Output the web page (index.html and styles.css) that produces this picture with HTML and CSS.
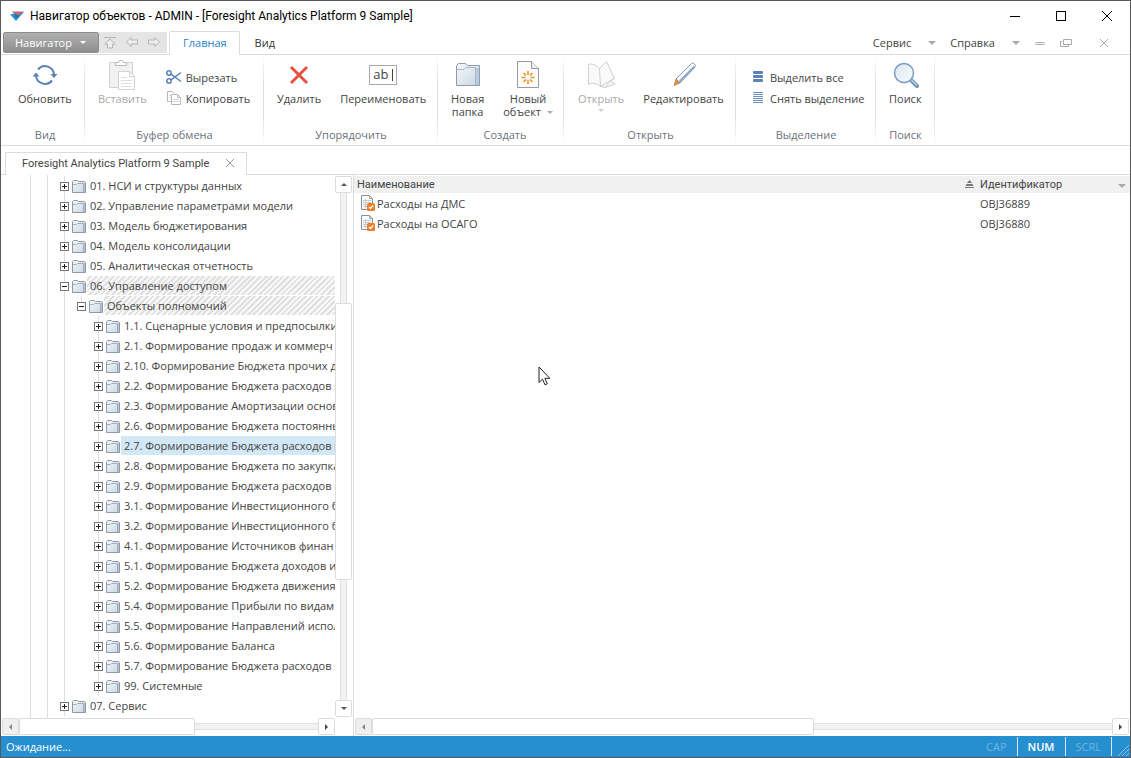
FILE: index.html
```html
<!doctype html>
<html lang="ru">
<head>
	<meta charset="utf-8">
	<meta name="viewport" content="width=device-width, initial-scale=1">
	<title>Навигатор объектов</title>
	<link rel="stylesheet" href="styles.css">
</head>
<body>
<!-- общие иконки -->
<svg class="defs" width="0" height="0" aria-hidden="true">
	<defs>
		<linearGradient id="gFolder" x1="0" y1="0" x2="1" y2="1">
			<stop offset="0" stop-color="#f6f8fa"/><stop offset="1" stop-color="#c9d6e2"/>
		</linearGradient>
		<linearGradient id="gLens" x1="0" y1="0" x2="1" y2="1">
			<stop offset="0" stop-color="#dbe7f1"/><stop offset="1" stop-color="#f8fbfd"/>
		</linearGradient>
		<symbol id="folder" viewBox="0 0 15 13">
			<path d="M.5 12.5V1.5L1.5.5H5.5L6.5 1.5H12.5L13.5 2.5V12.5Z" fill="url(#gFolder)" stroke="#8f9aa8"/>
			<path d="M1 4.500H4.500L5.500 3.500H11.500V12" fill="none" stroke="#a3afbd"/>
			<path d="M12.5 3V12" stroke="#b4c3d3"/>
		</symbol>
		<symbol id="doc" viewBox="0 0 15 16">
			<path d="M.5.5H8.500L11.500 3.500V14.500H.5Z" fill="#fcfcfc" stroke="#8d9299"/>
			<path d="M8.500.5V3.500H11.500" fill="none" stroke="#a5a9ae"/>
			<path d="M2 5.500H10M2 7.500H10M2 9.500H10M2 11.500H6M4.500 4V13" stroke="#c3ccd6"/>
			<rect x="6" y="8" width="8" height="8" rx="1.500" fill="#ee7f2d"/>
			<path d="M8 12L9.500 13.500L12.300 10.300" fill="none" stroke="#fff" stroke-width="1.200"/>
		</symbol>
		<symbol id="plus" viewBox="0 0 9 9">
			<rect x=".5" y=".5" width="8" height="8" fill="#fff" stroke="#777"/>
			<path d="M2 4.500H7M4.500 2V7" stroke="#222"/>
		</symbol>
		<symbol id="minus" viewBox="0 0 9 9">
			<rect x=".5" y=".5" width="8" height="8" fill="#fff" stroke="#777"/>
			<path d="M2 4.500H7" stroke="#222"/>
		</symbol>
	</defs>
</svg>

<div class="window">
	<header class="titlebar">
		<svg class="logo" width="14" height="10" viewBox="0 0 14 10">
			<path d="M0 3.500L14 1L6 10Z" fill="#2c93d1"/>
			<path d="M2 .5H14L9 4.500L4 3Z" fill="#b5697c"/>
			<path d="M4 3L9 4.500L6 7.500Z" fill="#1f6fae"/>
		</svg>
		<h1>Навигатор объектов - ADMIN - [Foresight Analytics Platform 9 Sample]</h1>
		<div class="winbtns">
			<button type="button" aria-label="Свернуть"><svg width="12" height="12"><path d="M1 6.500H11" stroke="#000"/></svg></button>
			<button type="button" aria-label="Развернуть"><svg width="12" height="12"><rect x="1.500" y="1.500" width="9" height="9" fill="none" stroke="#000"/></svg></button>
			<button type="button" aria-label="Закрыть"><svg width="12" height="12"><path d="M1 1L11 11M11 1L1 11" stroke="#111"/></svg></button>
		</div>
	</header>

	<nav class="menubar">
		<button type="button" class="navigator">Навигатор <i class="arrow"></i></button>
		<div class="history">
			<button type="button" aria-label="Вверх"><svg width="14" height="13" viewBox="0 0 14 13"><path d="M1 1.500H13M4.500 12V8H1.800L7 3L12.200 8H9.500V12Z"/></svg></button>
			<button type="button" aria-label="Назад"><svg width="14" height="13" viewBox="0 0 14 13"><path d="M1.500 6L6 1.500V4H12.500V8H6V10.500Z"/></svg></button>
			<button type="button" aria-label="Вперед"><svg width="14" height="13" viewBox="0 0 14 13"><path d="M12.500 6L8 1.500V4H1.500V8H8V10.500Z"/></svg></button>
		</div>
		<button type="button" class="tab active">Главная</button>
		<button type="button" class="tab">Вид</button>
		<div class="menuright">
			<button type="button" class="menu">Сервис <i class="arrow"></i></button>
			<button type="button" class="menu">Справка <i class="arrow"></i></button>
			<div class="mdi">
				<button type="button" aria-label="Свернуть окно"><svg width="12" height="10"><rect x="1.500" y="4.500" width="9" height="2" rx="1"/></svg></button>
				<button type="button" aria-label="Восстановить окно"><svg width="14" height="10"><path d="M4.500 1.500H12.500V6.500H4.500ZM3 3.500H1.500V8.500H9.500V7"/></svg></button>
				<button type="button" aria-label="Закрыть окно" class="last"><svg width="12" height="10"><path d="M2 1L10 9M10 1L2 9"/></svg></button>
			</div>
		</div>
	</nav>

	<div class="ribbon">
		<section class="group g-view">
			<div class="tools">
				<button type="button" class="big">
					<svg width="28" height="30" viewBox="0 0 28 30" fill="none" stroke="#5a82b4" stroke-width="2">
						<path d="M7 9.500A9 9 0 0 1 23 15M5 15A9 9 0 0 0 21 20.500"/>
						<path d="M1.500 16.500L5 12.500L8.500 16.500ZM19.500 14L23 18L26.500 14Z" fill="#5a82b4" stroke="none"/>
					</svg>
					Обновить
				</button>
			</div>
			<h2>Вид</h2>
		</section>

		<section class="group g-clip">
			<div class="tools">
				<button type="button" class="big" disabled>
					<svg width="28" height="30" viewBox="0 0 28 30" fill="#f4f4f4" stroke="#d2d2d2">
						<path d="M1.500 2.500H24.500V27.500H1.500Z" fill="#f1f1f1"/>
						<path d="M7.500 5.500V2.500H10.500L11.500.5H14.500L15.500 2.500H18.500V5.500Z" fill="#fff" stroke="#b9b9b9"/>
						<path d="M10.500 11.500H21.500L26.500 16.500V29.500H10.500Z" fill="#fff"/>
						<path d="M21.500 11.500V16.500H26.500" fill="none"/>
						<path d="M13 17.500H19M13 20.500H24M13 23.500H24M13 26.500H24" stroke="#dedede"/>
					</svg>
					Вставить
				</button>
				<div class="list">
					<button type="button" class="small">
						<svg width="16" height="14" viewBox="0 0 16 14" fill="none" stroke="#5a82b4" stroke-width="1.500">
							<circle cx="3" cy="3" r="2.200"/><circle cx="3" cy="11" r="2.200"/>
							<path d="M5 4.200L15 11.500M5 9.800L15 2.500"/>
						</svg>
						Вырезать
					</button>
					<button type="button" class="small">
						<svg width="16" height="14" viewBox="0 0 16 14" fill="#fff" stroke="#b5b9bd">
							<path d="M1.500.5H6.500L8.500 2.500V10.500H1.500Z"/><path d="M3 4.500H6M3 6.500H6" stroke="#d5d8db"/>
							<path d="M5.500 3.500H11.500L14.500 6.500V13.500H5.500Z"/><path d="M11.500 3.500V6.500H14.500" fill="none"/>
							<path d="M7 8.500H13M7 10.500H13" stroke="#d0d3d6"/>
						</svg>
						Копировать
					</button>
				</div>
			</div>
			<h2>Буфер обмена</h2>
		</section>

		<section class="group g-order">
			<div class="tools">
				<button type="button" class="big">
					<svg width="28" height="30" viewBox="0 0 28 30"><path d="M6 7L22 23M22 7L6 23" stroke="#e4523f" stroke-width="3"/></svg>
					Удалить
				</button>
				<button type="button" class="big">
					<span class="rename"><span>ab</span></span>
					Переименовать
				</button>
			</div>
			<h2>Упорядочить</h2>
		</section>

		<section class="group g-create">
			<div class="tools">
				<button type="button" class="big">
					<svg width="28" height="30" viewBox="0 0 28 30">
						<path d="M2.500 25.500V5.500L4.500 3.500H11.500L13.500 5.500H25.500V25.500Z" fill="url(#gFolder)" stroke="#8e9cad"/>
						<path d="M3 9.500H10L12 7.500H21.500V25" fill="none" stroke="#a9b8c9"/>
						<path d="M22 8H25V25H22Z" fill="#b9cbdc"/>
					</svg>
					Новая<br>папка
				</button>
				<button type="button" class="big">
					<svg width="28" height="30" viewBox="0 0 28 30">
						<path d="M3.500 1.500H17.500L24.500 8.500V27.500H3.500Z" fill="#fcfcfc" stroke="#969ba1"/>
						<path d="M17.500 1.500V8.500H24.500" fill="#eee" stroke="#969ba1"/>
						<path d="M14 11V15M14 20V24M7.500 17.500H11.500M16.500 17.500H20.500M9.500 13L12 15.500M18.500 13L16 15.500M9.500 22L12 19.500M18.500 22L16 19.500" stroke="#f0932b" stroke-width="1.600"/>
					</svg>
					<span>Новый<br>объект <i class="arrow drop"></i></span>
				</button>
			</div>
			<h2>Создать</h2>
		</section>

		<section class="group g-open">
			<div class="tools">
				<button type="button" class="big" disabled>
					<svg width="32" height="30" viewBox="0 0 32 30" fill="#fafafa" stroke="#cfcfcf" stroke-linejoin="round">
						<path d="M3.500 4.500C7 3 11 5 14.500 8.500L21.500 1.500L29.500 18.500L25 21L30 24L20 27.500L15.500 26.500C11 23 7 22.500 3.500 24.500Z"/>
						<path d="M14.500 8.500L15.500 26.500L22 22.500L29.500 18.500M25 21L20 27.500" fill="none"/>
					</svg>
					Открыть
					<i class="arrow pale"></i>
				</button>
				<button type="button" class="big">
					<svg width="28" height="30" viewBox="0 0 28 30" stroke-linejoin="round">
						<path d="M6 19L21.500 3.500C23 2 26.500 5 25 7L10 23Z" fill="#fff" stroke="#8296ad"/>
						<path d="M9.500 21.500L24.500 6.500" stroke="#89a8cd" stroke-width="2"/>
						<path d="M6 19L10 23L4 25.500Z" fill="#f08c30" stroke="#9b7352" stroke-width=".6"/>
					</svg>
					Редактировать
				</button>
			</div>
			<h2>Открыть</h2>
		</section>

		<section class="group g-select">
			<div class="tools">
				<div class="list">
					<button type="button" class="small">
						<svg width="12" height="14" viewBox="0 0 12 14" fill="#5a82b4"><rect x="1" y="1" width="10" height="3" rx="1"/><rect x="1" y="5" width="10" height="3" rx="1"/><rect x="1" y="9" width="10" height="3" rx="1"/></svg>
						Выделить все
					</button>
					<button type="button" class="small">
						<svg width="12" height="14" viewBox="0 0 12 14" stroke="#6f93c0"><path d="M1 1.500H11M1 3.500H11M1 5.500H11M1 7.500H11M1 9.500H11M1 11.500H11"/></svg>
						Снять выделение
					</button>
				</div>
			</div>
			<h2>Выделение</h2>
		</section>

		<section class="group g-search">
			<div class="tools">
				<button type="button" class="big">
					<svg width="28" height="30" viewBox="0 0 28 30">
						<path d="M20 20L26 26" stroke="#7292b8" stroke-width="4" stroke-linecap="round"/>
						<path d="M20 19.500L26 25.500" stroke="#b9d0e8" stroke-width="1.500"/>
						<circle cx="13" cy="13" r="9.500" fill="url(#gLens)" stroke="#7a9cc3" stroke-width="1.500"/>
					</svg>
					Поиск
				</button>
			</div>
			<h2>Поиск</h2>
		</section>
	</div>

	<div class="doctabs">
		<div class="doctab">
			<span>Foresight Analytics Platform 9 Sample</span>
			<button type="button" aria-label="Закрыть вкладку"><svg width="10" height="10"><path d="M1 1L9 9M9 1L1 9" stroke="#999"/></svg></button>
		</div>
	</div>

	<main class="content">
		<aside class="treepane">
			<div class="treebody">
				<div class="tree">
					<ul class="line">
						<li><button type="button" aria-label="Раскрыть"><svg><use href="#plus"/></svg></button><svg class="folder"><use href="#folder"/></svg><span>01. НСИ и структуры данных</span></li>
						<li><button type="button" aria-label="Раскрыть"><svg><use href="#plus"/></svg></button><svg class="folder"><use href="#folder"/></svg><span>02. Управление параметрами модели</span></li>
						<li><button type="button" aria-label="Раскрыть"><svg><use href="#plus"/></svg></button><svg class="folder"><use href="#folder"/></svg><span>03. Модель бюджетирования</span></li>
						<li><button type="button" aria-label="Раскрыть"><svg><use href="#plus"/></svg></button><svg class="folder"><use href="#folder"/></svg><span>04. Модель консолидации</span></li>
						<li><button type="button" aria-label="Раскрыть"><svg><use href="#plus"/></svg></button><svg class="folder"><use href="#folder"/></svg><span>05. Аналитическая отчетность</span></li>
						<li><button type="button" aria-label="Свернуть"><svg><use href="#minus"/></svg></button><svg class="folder"><use href="#folder"/></svg><span class="path">06. Управление доступом</span>
							<ul class="stub">
								<li><button type="button" aria-label="Свернуть"><svg><use href="#minus"/></svg></button><svg class="folder"><use href="#folder"/></svg><span class="path">Объекты полномочий</span>
									<ul class="line">
										<li><button type="button" aria-label="Раскрыть"><svg><use href="#plus"/></svg></button><svg class="folder"><use href="#folder"/></svg><span>1.1. Сценарные условия и предпосылки</span></li>
										<li><button type="button" aria-label="Раскрыть"><svg><use href="#plus"/></svg></button><svg class="folder"><use href="#folder"/></svg><span>2.1. Формирование продаж и коммерч</span></li>
										<li><button type="button" aria-label="Раскрыть"><svg><use href="#plus"/></svg></button><svg class="folder"><use href="#folder"/></svg><span>2.10. Формирование Бюджета прочих д</span></li>
										<li><button type="button" aria-label="Раскрыть"><svg><use href="#plus"/></svg></button><svg class="folder"><use href="#folder"/></svg><span>2.2. Формирование Бюджета расходов н</span></li>
										<li><button type="button" aria-label="Раскрыть"><svg><use href="#plus"/></svg></button><svg class="folder"><use href="#folder"/></svg><span>2.3. Формирование Амортизации основ</span></li>
										<li><button type="button" aria-label="Раскрыть"><svg><use href="#plus"/></svg></button><svg class="folder"><use href="#folder"/></svg><span>2.6. Формирование Бюджета постоянны</span></li>
										<li><button type="button" aria-label="Раскрыть"><svg><use href="#plus"/></svg></button><svg class="folder"><use href="#folder"/></svg><span class="selected">2.7. Формирование Бюджета расходов н</span></li>
										<li><button type="button" aria-label="Раскрыть"><svg><use href="#plus"/></svg></button><svg class="folder"><use href="#folder"/></svg><span>2.8. Формирование Бюджета по закупка</span></li>
										<li><button type="button" aria-label="Раскрыть"><svg><use href="#plus"/></svg></button><svg class="folder"><use href="#folder"/></svg><span>2.9. Формирование Бюджета расходов н</span></li>
										<li><button type="button" aria-label="Раскрыть"><svg><use href="#plus"/></svg></button><svg class="folder"><use href="#folder"/></svg><span>3.1. Формирование Инвестиционного б</span></li>
										<li><button type="button" aria-label="Раскрыть"><svg><use href="#plus"/></svg></button><svg class="folder"><use href="#folder"/></svg><span>3.2. Формирование Инвестиционного б</span></li>
										<li><button type="button" aria-label="Раскрыть"><svg><use href="#plus"/></svg></button><svg class="folder"><use href="#folder"/></svg><span>4.1. Формирование Источников финан</span></li>
										<li><button type="button" aria-label="Раскрыть"><svg><use href="#plus"/></svg></button><svg class="folder"><use href="#folder"/></svg><span>5.1. Формирование Бюджета доходов и</span></li>
										<li><button type="button" aria-label="Раскрыть"><svg><use href="#plus"/></svg></button><svg class="folder"><use href="#folder"/></svg><span>5.2. Формирование Бюджета движения</span></li>
										<li><button type="button" aria-label="Раскрыть"><svg><use href="#plus"/></svg></button><svg class="folder"><use href="#folder"/></svg><span>5.4. Формирование Прибыли по видам</span></li>
										<li><button type="button" aria-label="Раскрыть"><svg><use href="#plus"/></svg></button><svg class="folder"><use href="#folder"/></svg><span>5.5. Формирование Направлений испол</span></li>
										<li><button type="button" aria-label="Раскрыть"><svg><use href="#plus"/></svg></button><svg class="folder"><use href="#folder"/></svg><span>5.6. Формирование Баланса</span></li>
										<li><button type="button" aria-label="Раскрыть"><svg><use href="#plus"/></svg></button><svg class="folder"><use href="#folder"/></svg><span>5.7. Формирование Бюджета расходов н</span></li>
										<li><button type="button" aria-label="Раскрыть"><svg><use href="#plus"/></svg></button><svg class="folder"><use href="#folder"/></svg><span>99. Системные</span></li>
									</ul>
								</li>
							</ul>
						</li>
						<li><button type="button" aria-label="Раскрыть"><svg><use href="#plus"/></svg></button><svg class="folder"><use href="#folder"/></svg><span>07. Сервис</span></li>
					</ul>
				</div>
				<div class="scroll vert">
					<button type="button" aria-label="Прокрутить вверх"><i class="tri up"></i></button>
					<i class="rail before"></i><i class="thumb"></i><i class="rail after"></i>
					<button type="button" aria-label="Прокрутить вниз"><i class="tri down"></i></button>
				</div>
			</div>
			<div class="scroll horz tree-h">
				<button type="button" aria-label="Прокрутить влево" disabled><i class="tri left"></i></button>
				<i class="thumb"></i><i class="rail"></i>
				<button type="button" aria-label="Прокрутить вправо"><i class="tri right"></i></button>
			</div>
		</aside>

		<section class="listpane">
			<table>
				<colgroup><col><col class="c-id"><col class="c-menu"></colgroup>
				<thead>
					<tr>
						<th scope="col"><div class="sorted">Наименование <svg width="9" height="9" viewBox="0 0 9 9" fill="#777"><path d="M4.500 0L7 3H2ZM1.500 4H7.500L8.500 6H.5ZM0 7H9V8H0Z"/></svg></div></th>
						<th scope="col">Идентификатор</th>
						<th scope="col" aria-label="Столбцы"><i class="arrow"></i></th>
					</tr>
				</thead>
				<tbody>
					<tr><td><div class="name"><svg width="15" height="16"><use href="#doc"/></svg>Расходы на ДМС</div></td><td>OBJ36889</td><td></td></tr>
					<tr><td><div class="name"><svg width="15" height="16"><use href="#doc"/></svg>Расходы на ОСАГО</div></td><td>OBJ36880</td><td></td></tr>
				</tbody>
			</table>
			<div class="scroll horz list-h">
				<button type="button" aria-label="Прокрутить влево" disabled><i class="tri left"></i></button>
				<i class="thumb"></i><i class="rail"></i>
				<button type="button" aria-label="Прокрутить вправо"><i class="tri right"></i></button>
			</div>
		</section>
	</main>

	<footer class="status">
		<span class="state">Ожидание...</span>
		<span class="key">CAP</span>
		<span class="key on">NUM</span>
		<span class="key">SCRL</span>
		<svg class="grip" width="18" height="20" viewBox="0 0 18 20"><path d="M6 19L17 8M10 19L17 12M14 19L17 16" stroke="#8fbfe0"/></svg>
	</footer>
</div>

<!-- курсор мыши -->
<svg class="cursor" width="13" height="20" viewBox="0 0 13 20"><path d="M1 1V16.500L4.500 13.200L7 18.800L9.300 17.800L6.900 12.300H11.800Z" fill="#fff" stroke="#222"/></svg>
</body>
</html>
```
FILE: styles.css
```css
*{margin:0;padding:0;box-sizing:border-box;}
ul,li{list-style:none;}
i{font-style:normal;}
svg{display:block;flex:none;}
button{background:none;border:0;font:inherit;color:inherit;}
body{font:11px/13px "Open Sans","Noto Sans",sans-serif;color:#444;background:#fff;}
.defs{position:absolute;}

.window{display:flex;flex-direction:column;height:100vh;border:1px solid #58585a;overflow:hidden;}

.arrow{display:inline-block;border:4px solid transparent;border-top-color:#aaa;border-bottom:0;}

/* заголовок окна */
.titlebar{display:flex;align-items:center;height:30px;padding-left:9px;flex:none;}
.titlebar h1{flex:1;margin-left:6px;font:12px/16px Roboto,sans-serif;color:#000;white-space:nowrap;}
.winbtns{display:flex;}
.winbtns button{width:46px;height:28px;display:flex;align-items:center;justify-content:center;}

/* меню */
.menubar{display:flex;height:24px;flex:none;border-bottom:1px solid #dcdcdc;padding-left:2px;}
.navigator{display:flex;align-items:center;justify-content:space-between;width:96px;height:21px;margin-top:1px;padding:0 12px 0 11px;color:#fff;background:linear-gradient(#b0b0b0,#8e8e8e);border:1px solid #8d8d8d;border-radius:2px;}
.navigator .arrow{border-width:3px;border-bottom:0;border-top-color:#fff;}
.history{display:flex;width:68px;height:21px;margin:1px 2px 0 0;background:#e5e5e5;}
.history button{width:22px;display:flex;align-items:center;justify-content:center;}
.history svg{fill:#eee;stroke:#b5b5b5;}
.tab{height:24px;padding:0 15px 2px;color:#333;}
.tab.active{padding:0 12px 2px 13px;color:#1f83c4;background:#fff;border:1px solid #dcdcdc;border-bottom:0;border-radius:2px 2px 0 0;}
.menuright{display:flex;margin-left:auto;}
.menu{display:flex;align-items:center;gap:17px;margin-right:14px;}
.mdi{display:flex;align-items:center;gap:13px;padding-right:20px;}
.mdi svg{fill:none;stroke:#aaa;}
.mdi .last{margin-left:12px;}

/* лента */
.ribbon{display:flex;height:91px;flex:none;border-bottom:1px solid #dcdcdc;}
.group{display:flex;flex-direction:column;padding:5px 12px 2px 13px;border-right:1px solid;border-image:linear-gradient(#fff,#e0e0e0 30%,#e0e0e0 70%,#fff) 1;}
.g-view{width:84px;padding-left:17px;}
.g-clip{width:179px;}
.g-order{width:174px;}
.g-create{width:126px;padding-right:4px;}
.g-open{width:172px;padding-left:14px;}
.g-select{width:140px;}
.g-search{width:59px;}
.tools{display:flex;flex:1;gap:19px;white-space:nowrap;}
.group h2{font-size:11px;line-height:16px;font-weight:normal;text-align:center;color:#6c717a;}
.big{display:flex;flex-direction:column;align-items:center;align-self:flex-start;}
.big svg,.rename{margin-bottom:2px;}
.big:disabled{color:#aaa;}
.arrow.pale{border-width:3px;border-bottom:0;margin-top:4px;border-top-color:#d0d0d0;}
.arrow.drop{border-width:3px;border-bottom:0;margin:0 0 2px 3px;}
.list{display:flex;flex-direction:column;gap:7px;padding-top:10px;}
.small{display:flex;align-items:center;gap:4px;height:14px;}
.g-select .list{margin-left:3px;}
.g-select .small{gap:6px;}
.rename{display:flex;align-items:center;height:30px;}
.rename span{width:28px;height:20px;padding-left:3px;border:1px solid #a9a9a9;font-size:13px;line-height:17px;text-align:left;background:linear-gradient(#444,#444) 22px 3px/1px 12px no-repeat;}

/* вкладки документов */
.doctabs{display:flex;align-items:flex-end;height:29px;flex:none;padding-left:4px;border-bottom:1px solid #dcdcdc;}
.doctab{display:flex;align-items:center;justify-content:space-between;width:242px;height:23px;margin-bottom:-1px;padding:0 11px 2px 16px;font-family:Roboto,sans-serif;background:#fff;border:1px solid #dcdcdc;border-bottom:0;}

.content{display:flex;flex:1;min-height:0;}

/* дерево объектов */
.treepane{display:flex;flex-direction:column;width:353px;flex:none;border-right:1px solid #dcdcdc;}
.treebody{display:flex;flex:1;min-height:0;}
.tree{flex:1;min-width:0;overflow:hidden;padding:1px 0 0 55px;background:linear-gradient(#dedede,#dedede) 29px 0/1px 100% no-repeat,linear-gradient(#dedede,#dedede) 46px 0/1px 100% no-repeat;}
.tree ul{background:linear-gradient(#dedede,#dedede) 8px 0/1px 100% no-repeat;}
.tree ul.stub{background-size:1px 10px;}
.tree li{display:flex;flex-wrap:wrap;}
.tree li>ul{width:100%;margin-left:17px;}
.tree li>button{width:16px;height:20px;padding-left:4px;}
.tree li>button svg{width:9px;height:9px;}
.tree .folder{width:15px;height:13px;margin-top:4px;}
.tree span{flex:1 0 0;min-width:0;height:19px;padding-left:3px;line-height:20px;white-space:nowrap;overflow:hidden;}
.tree .path{background:repeating-linear-gradient(135deg,#f8f8f8 0 2px,#e0e0e0 2px 4px);}
.tree .selected{background:#d3e8f6;}

/* полосы прокрутки */
.scroll{display:flex;flex:none;}
.scroll button,.thumb{background:#fff;border:1px solid #dcdcdc;border-radius:2px;}
.scroll button{display:flex;align-items:center;justify-content:center;width:17px;height:17px;flex:none;}
.scroll button:disabled{background:#efefef;}
.rail{background:#f2f2f2;}
.vert{flex-direction:column;width:17px;margin-right:1px;padding:1px 0;}
.vert .rail{width:7px;margin:0 5px;border:1px solid #e0e0e0;border-width:0 1px;}
.vert .before{flex:110;}
.vert .thumb{flex:277;}
.vert .after{flex:120;}
.horz{height:18px;}
.horz .rail{height:7px;margin:5px 0;border:1px solid #e0e0e0;border-width:1px 0;}
.tree-h{padding:0 18px 0 1px;}
.tree-h .thumb{flex:175;}
.tree-h .rail{flex:123;}
.horz .thumb{height:17px;}
.list-h{margin-top:auto;padding:0 1px;}
.list-h .thumb{flex:441;}
.list-h .rail{flex:298;}
.tri{border:3px solid transparent;}
.up{border-bottom-color:#555;border-top:0;}
.down{border-top-color:#555;border-bottom:0;}
.left{border-right-color:#888;border-left:0;}
.right{border-left-color:#444;border-right:0;}

/* список */
.listpane{display:flex;flex-direction:column;flex:1;min-width:0;}
table{width:100%;margin-top:1px;table-layout:fixed;border-collapse:collapse;}
.c-id{width:134px;}
.c-menu{width:17px;}
th{height:17px;text-align:left;font:11px/13px Roboto,sans-serif;background:#f1f1f1;}
th:first-child{padding-left:3px;}
.sorted{display:flex;justify-content:space-between;align-items:center;padding-right:5px;}
th:nth-child(2),td:nth-child(2){padding-left:1px;}
th:last-child{text-align:center;line-height:6px;}
td{height:20px;}
.name{display:flex;align-items:center;gap:1px;padding-left:7px;}

/* строка состояния */
.status{display:flex;align-items:center;height:21px;flex:none;padding-left:5px;color:#fff;background:#268fcf;}
.state{flex:1;}
.key{padding:3px 10px;color:#6fb4e0;border-right:1px solid #d5e9f6;}
.key.on{color:#fff;font-weight:600;}

.cursor{position:absolute;left:538px;top:366px;}
```
